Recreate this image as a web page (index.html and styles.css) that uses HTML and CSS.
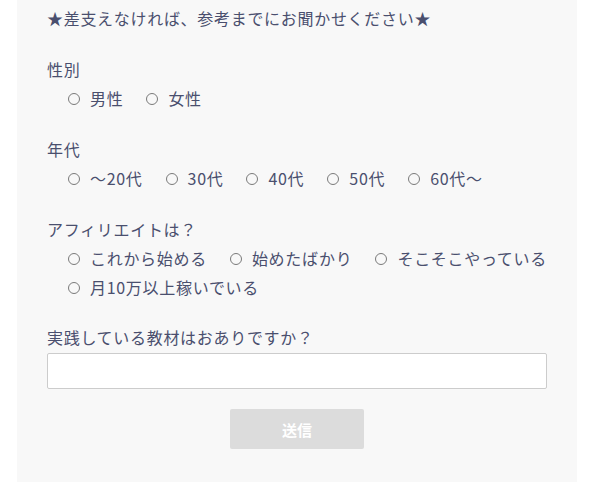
FILE: index.html
```html
<!DOCTYPE html>
<html lang="ja">
<head>
    <meta charset="UTF-8">
    <meta name="viewport" content="width=device-width, initial-scale=1.0">
    <title>アンケート</title>
    <link rel="stylesheet" href="styles.css">
</head>
<body>
    <form class="survey">
        <p class="lead">★差支えなければ、参考までにお聞かせください★</p>

        <div class="group">
            <div class="group-label">性別</div>
            <div class="options">
                <label class="option"><input type="radio" name="gender"><span>男性</span></label>
                <label class="option"><input type="radio" name="gender"><span>女性</span></label>
            </div>
        </div>

        <div class="group">
            <div class="group-label">年代</div>
            <div class="options">
                <label class="option"><input type="radio" name="age"><span>～20代</span></label>
                <label class="option"><input type="radio" name="age"><span>30代</span></label>
                <label class="option"><input type="radio" name="age"><span>40代</span></label>
                <label class="option"><input type="radio" name="age"><span>50代</span></label>
                <label class="option"><input type="radio" name="age"><span>60代～</span></label>
            </div>
        </div>

        <div class="group">
            <div class="group-label">アフィリエイトは？</div>
            <div class="options">
                <label class="option"><input type="radio" name="affiliate"><span>これから始める</span></label>
                <label class="option"><input type="radio" name="affiliate"><span>始めたばかり</span></label>
                <label class="option"><input type="radio" name="affiliate"><span>そこそこやっている</span></label>
                <label class="option"><input type="radio" name="affiliate"><span>月10万以上稼いでいる</span></label>
            </div>
        </div>

        <div class="group group-text">
            <div class="group-label">実践している教材はおありですか？</div>
            <input type="text" class="text-input">
        </div>

        <div class="actions">
            <button type="button" class="submit">送信</button>
        </div>
    </form>
</body>
</html>
```

FILE: styles.css
```css
* {
    margin: 0;
    padding: 0;
    box-sizing: border-box;
}

body {
    background-color: #ffffff;
    font-family: "Noto Sans CJK JP", "Noto Sans", sans-serif;
    font-size: 16px;
    letter-spacing: 0.7px;
    color: #4a4f6e;
}

.survey {
    width: 560px;
    margin-left: 17px;
    min-height: 482px;
    background-color: #f8f8f8;
    padding: 4px 30px 0 30px;
}

.lead {
    line-height: 29px;
    margin-bottom: 22px;
}

.group {
    margin-bottom: 22px;
}

.group-label {
    line-height: 29px;
}

.options {
    display: flex;
    flex-wrap: wrap;
    column-gap: 23px;
    padding-left: 21px;
    margin-right: -10px;
}

.option {
    display: flex;
    align-items: center;
    line-height: 29px;
}

.option input {
    appearance: none;
    -webkit-appearance: none;
    width: 12px;
    height: 12px;
    border: 1px solid #7a7a7a;
    border-radius: 50%;
    margin-right: 10px;
    background: transparent;
}

.group-text {
    margin-top: -1px;
    margin-bottom: 20px;
}

.group-text .group-label {
    margin-bottom: 1px;
}

.text-input {
    display: block;
    width: 500px;
    height: 36px;
    border: 1px solid #cccccc;
    border-radius: 2px;
    background-color: #ffffff;
}

.actions {
    display: flex;
    justify-content: center;
}

.submit {
    width: 134px;
    height: 40px;
    border: none;
    border-radius: 2px;
    background-color: #dcdcdc;
    color: #ffffff;
    font-family: inherit;
    font-size: 15px;
    font-weight: bold;
}
```
